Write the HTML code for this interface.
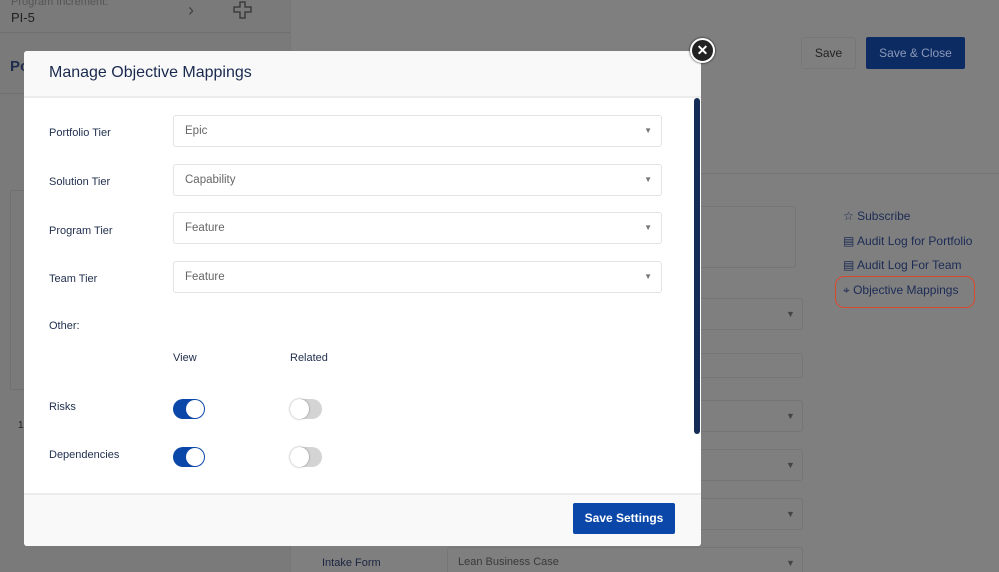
<!DOCTYPE html>
<html style="background:#7f7f7f"><head><style>
*{box-sizing:border-box;margin:0;padding:0}
html,body{width:999px;height:572px;overflow:hidden;background:#7f7f7f}
body{font-family:"Liberation Sans",sans-serif;position:relative}
.a{position:absolute}
.bx{position:absolute;border:1px solid #757575;border-radius:3px}
.tri{position:absolute;font-size:9px;color:#444}
.lbl{position:absolute;left:25px;font-size:11px;color:#1f2d4d}
.sel{position:absolute;left:149px;width:489px;height:32px;border:1px solid #e3e3e3;border-radius:3px;background:#fff;font-size:11.5px;color:#666;padding:9px 11px}
.sel:after{content:"▼";position:absolute;right:9px;top:10px;font-size:8px;color:#777}
.tg{position:absolute;width:32px;height:20px;border-radius:10px}
.on{background:#0a47a9}
.on:after{content:"";position:absolute;right:1px;top:1px;width:18px;height:18px;border-radius:50%;background:#fff}
.off{background:#d4d4d4}
.off:after{content:"";position:absolute;left:0;top:0;width:19px;height:20px;border-radius:50%;background:#fff;box-shadow:0 0 2px rgba(0,0,0,.4)}
</style></head><body>
<svg class="a" style="left:0;top:0" width="999" height="572"><rect width="999" height="572" fill="#7f7f7f"/><rect width="290" height="572" fill="#7a7a7a"/></svg>
<div class="a" style="left:0;top:32px;width:290px;height:1px;background:#707070"></div>
<div class="a" style="left:11px;top:-4px;font-size:11px;color:#555">Program Increment:</div>
<div class="a" style="left:11px;top:10px;font-size:13px;color:#222">PI-5</div>
<div class="a" style="left:188px;top:0;font-size:18px;color:#444">&#8250;</div>
<svg class="a" style="left:233px;top:1px" width="20" height="18"><path d="M7 1h5v5h6v5h-6v6H7v-6H1V6h6z" fill="none" stroke="#333" stroke-width="1.3"/></svg>
<div class="a" style="left:10px;top:58px;font-size:15px;font-weight:bold;color:#1f2d4d">Po</div>
<div class="a" style="left:0;top:93px;width:290px;height:1px;background:#707070"></div>
<div class="a" style="left:10px;top:190px;width:20px;height:200px;border:1px solid #707070;border-right:none"></div>
<div class="a" style="left:18px;top:420px;font-size:10px;color:#222">1</div>
<div class="a" style="left:290px;top:0;width:1px;height:572px;background:#777"></div>
<div class="bx" style="left:801px;top:37px;width:55px;height:32px;font-size:12px;color:#222;text-align:center;line-height:30px;border-color:#777">Save</div>
<div class="a" style="left:866px;top:37px;width:99px;height:32px;background:#0d2b63;border-radius:2px;font-size:12px;color:#8b9ab8;text-align:center;line-height:32px">Save &amp; Close</div>
<div class="a" style="left:700px;top:173px;width:299px;height:1px;background:#757575"></div>
<div class="bx" style="left:690px;top:206px;width:106px;height:62px"></div>
<div class="bx" style="left:690px;top:298px;width:113px;height:32px"></div><div class="tri" style="left:786px;top:309px">▼</div>
<div class="bx" style="left:690px;top:353px;width:113px;height:25px"></div>
<div class="bx" style="left:690px;top:400px;width:113px;height:32px"></div><div class="tri" style="left:786px;top:411px">▼</div>
<div class="bx" style="left:690px;top:449px;width:113px;height:32px"></div><div class="tri" style="left:786px;top:460px">▼</div>
<div class="bx" style="left:690px;top:498px;width:113px;height:32px"></div><div class="tri" style="left:786px;top:509px">▼</div>
<div class="bx" style="left:447px;top:547px;width:356px;height:32px"></div><div class="tri" style="left:786px;top:558px">▼</div>
<div class="a" style="left:322px;top:557px;font-size:11px;color:#1a2440">Intake Form</div>
<div class="a" style="left:458px;top:556px;font-size:11px;color:#3a3a3a">Lean Business Case</div>
<div class="a" style="left:843px;top:204px;font-size:12px;color:#1c2b55;line-height:24.5px">
<div>☆ Subscribe</div><div>▤ Audit Log for Portfolio</div><div>▤ Audit Log For Team</div><div>⌖ Objective Mappings</div></div>
<div class="a" style="left:835px;top:276px;width:140px;height:32px;border:1px solid #d84a2e;border-radius:9px"></div>

<div class="a" style="left:24px;top:51px;width:677px;height:495px;background:#fff;border-radius:3px;overflow:hidden">
 <div class="a" style="left:0;top:0;width:677px;height:47px;background:#f9f9f9;border-bottom:2px solid #ececec"></div>
 <div class="a" style="left:25px;top:13px;font-size:16px;color:#1a2a4e">Manage Objective Mappings</div>
 <div class="lbl" style="top:76px">Portfolio Tier</div><div class="sel" style="top:64px">Epic</div>
 <div class="lbl" style="top:125px">Solution Tier</div><div class="sel" style="top:113px">Capability</div>
 <div class="lbl" style="top:174px">Program Tier</div><div class="sel" style="top:161px">Feature</div>
 <div class="lbl" style="top:222px">Team Tier</div><div class="sel" style="top:210px">Feature</div>
 <div class="lbl" style="top:269px">Other:</div>
 <div class="lbl" style="left:149px;top:301px">View</div>
 <div class="lbl" style="left:266px;top:301px">Related</div>
 <div class="lbl" style="top:350px">Risks</div>
 <div class="tg on" style="left:149px;top:348px"></div><div class="tg off" style="left:266px;top:348px"></div>
 <div class="lbl" style="top:398px">Dependencies</div>
 <div class="tg on" style="left:149px;top:396px"></div><div class="tg off" style="left:266px;top:396px"></div>
 <div class="a" style="left:670px;top:47px;width:6px;height:336px;background:#152c57;border-radius:3px"></div>
 <div class="a" style="left:0;top:442px;width:677px;height:53px;background:#f9f9f9;border-top:2px solid #ececec"></div>
 <div class="a" style="left:549px;top:452px;width:102px;height:31px;background:#0a47a9;border-radius:2px;color:#fff;font-size:12px;font-weight:bold;text-align:center;line-height:31px">Save Settings</div>
</div>
<div class="a" style="left:690px;top:38px;width:25px;height:25px;border-radius:50%;background:#222;border:2px solid #fff;box-shadow:0 0 2px #000;color:#fff;font-size:14px;font-weight:bold;text-align:center;line-height:21px">✕</div>
</body></html>
